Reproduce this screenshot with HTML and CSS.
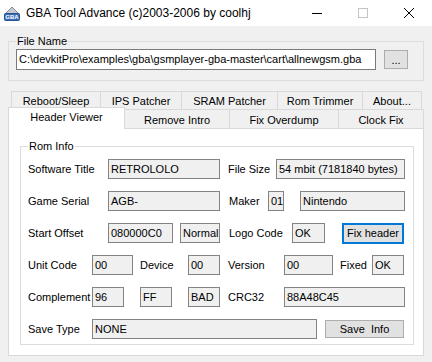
FILE: index.html
```html
<!DOCTYPE html>
<html lang="en">
<head>
  <meta charset="UTF-8" />
  <title>GBA Tool Advance</title>
  <link rel="stylesheet" href="styles.css">
</head>
<body>
  <!-- Title bar -->
  <div class="titlebar">
    <svg class="app-icon" viewBox="0 0 16 16">
      <polygon points="1,9 8,2 15,9" fill="#c8c8d0" stroke="#8a8a96" stroke-width="1"/>
      <rect x="0.5" y="8.5" width="15" height="7" rx="1" fill="#3a6fb8" stroke="#24508f"/>
      <text x="8" y="14.3" font-size="6" font-family="Liberation Sans, sans-serif" font-weight="bold" fill="#fff" text-anchor="middle">GBA</text>
    </svg>
    <span class="title">GBA Tool Advance (c)2003-2006 by coolhj</span>
    <div class="caption-buttons">
      <span class="cap-btn">
        <svg width="12" height="12" viewBox="0 0 12 12"><path d="M1 6.5h10" stroke="#000" stroke-width="1"/></svg>
      </span>
      <span class="cap-btn">
        <svg width="12" height="12" viewBox="0 0 12 12"><rect x="1.5" y="1.5" width="9" height="9" fill="none" stroke="#c4c4c4"/></svg>
      </span>
      <span class="cap-btn">
        <svg width="12" height="12" viewBox="0 0 12 12"><path d="M1 1L11 11M11 1L1 11" stroke="#000" stroke-width="1"/></svg>
      </span>
    </div>
  </div>

  <div class="window-body">
    <fieldset class="group file-group">
      <legend>File Name</legend>
      <div class="file-row">
        <div class="edit file-path">C:\devkitPro\examples\gba\gsmplayer-gba-master\cart\allnewgsm.gba</div>
        <div class="button browse">...</div>
      </div>
    </fieldset>

    <!-- Tabs -->
    <div class="tabs">
      <div class="tab-row back">
        <div class="tab w90">Reboot/Sleep</div>
        <div class="tab w82">IPS Patcher</div>
        <div class="tab w97">SRAM Patcher</div>
        <div class="tab w86">Rom Trimmer</div>
        <div class="tab w60">About...</div>
      </div>
      <div class="tab-row front">
        <div class="tab selected w117">Header Viewer</div>
        <div class="tab w106">Remove Intro</div>
        <div class="tab w110">Fix Overdump</div>
        <div class="tab w86">Clock Fix</div>
      </div>

      <div class="tab-panel">
        <fieldset class="group rom-group">
          <legend>Rom Info</legend>

          <div class="row">
            <span class="lbl w80">Software Title</span>
            <div class="edit w112">RETROLOLO</div>
            <span class="lbl w56 pl8">File Size</span>
            <div class="edit w129">54 mbit (7181840 bytes)</div>
          </div>

          <div class="row">
            <span class="lbl w80">Game Serial</span>
            <div class="edit w112">AGB-</div>
            <span class="lbl w48 pl9">Maker</span>
            <div class="edit w16">01</div>
            <div class="edit w105 ml16">Nintendo</div>
          </div>

          <div class="row">
            <span class="lbl w80">Start Offset</span>
            <div class="edit w65">080000C0</div>
            <div class="edit w40 ml7">Normal</div>
            <span class="lbl w72 pl9">Logo Code</span>
            <div class="edit w33">OK</div>
            <div class="button default w62 ml17">Fix header</div>
          </div>

          <div class="row">
            <span class="lbl w64">Unit Code</span>
            <div class="edit w41">00</div>
            <span class="lbl w55 pl7">Device</span>
            <div class="edit w32">00</div>
            <span class="lbl w64 pl8">Version</span>
            <div class="edit w49">00</div>
            <span class="lbl w39 pl7">Fixed</span>
            <div class="edit w32">OK</div>
          </div>

          <div class="row">
            <span class="lbl w64">Complement</span>
            <div class="edit w32">96</div>
            <div class="edit w32 ml16">FF</div>
            <div class="edit w32 ml16">BAD</div>
            <span class="lbl w64 pl8">CRC32</span>
            <div class="edit w121">88A48C45</div>
          </div>

          <div class="row">
            <span class="lbl w64">Save Type</span>
            <div class="edit w225">NONE</div>
            <div class="button save w79 ml8">Save&nbsp; Info</div>
          </div>
        </fieldset>
      </div>
    </div>
  </div>
</body>
</html>
```

FILE: styles.css
```css
* {
  box-sizing: border-box;
}

body {
  margin: 0;
  width: 432px;
  height: 362px;
  overflow: hidden;
  background: #f0f0f0;
  font-family: "Liberation Sans", Arial, sans-serif;
  font-size: 11px;
  color: #000;
}

/* title bar */
.titlebar {
  height: 26px;
  background: #fff;
  display: flex;
  align-items: center;
  font-size: 12px;
}

.app-icon {
  width: 16px;
  height: 16px;
  margin-left: 4px;
  margin-right: 6px;
}

.title {
  flex: 1;
}

.caption-buttons {
  display: flex;
  align-self: stretch;
}

.cap-btn {
  width: 46px;
  display: flex;
  align-items: center;
  justify-content: center;
}

.window-body {
  padding: 0 8px;
}

/* group boxes */
.group {
  min-width: 0;
  border: 1px solid #dcdcdc;
}

.group legend {
  padding: 0 1px;
  line-height: 13px;
}

.file-group {
  margin: 9px 0 0 0;
  width: 416px;
  padding: 1px 15px 10px 7px;
}

.file-row {
  display: flex;
  align-items: flex-start;
  gap: 8px;
}

/* edit boxes + buttons */
.edit {
  height: 20px;
  border: 1px solid #838383;
  background: #f0f0f0;
  padding: 1px 2px;
  line-height: 16px;
  white-space: nowrap;
  overflow: hidden;
}

.file-path {
  width: 361px;
  height: 21px;
  background: #fff;
  border-color: #7a7a7a;
}

.button {
  height: 20px;
  border: 1px solid #adadad;
  background: #e1e1e1;
  display: flex;
  align-items: center;
  justify-content: center;
  white-space: nowrap;
}

.button.default {
  border-color: #0078d7;
  box-shadow: inset 0 0 0 1px #0078d7;
  height: 21px;
}

.browse {
  width: 24px;
  height: 19px;
  margin-top: 1px;
}

.save {
  height: 18px;
}

/* tabs */
.tabs {
  margin-top: 10px;
}

.tab-row {
  display: flex;
}

.tab-row.back {
  margin-left: 3px;
  height: 18px;
}

.tab-row.front {
  height: 19px;
  align-items: flex-start;
}

.tab {
  border: 1px solid #d9d9d9;
  border-bottom: none;
  background: #f0f0f0;
  text-align: center;
  line-height: 13px;
  margin-left: -1px;
  white-space: nowrap;
}

.tab:first-child {
  margin-left: 0;
}

.back .tab {
  height: 18px;
  padding-top: 3px;
}

.front .tab {
  height: 19px;
  padding-top: 4px;
}

.tab.selected {
  position: relative;
  z-index: 1;
  height: 22px;
  margin-top: -2px;
  padding-top: 3px;
  background: #fff;
}

.tab-panel {
  width: 416px;
  height: 228px;
  background: #fff;
  border: 1px solid #d9d9d9;
  overflow: hidden;
}

.rom-group {
  margin: 11px 9px 0 11px;
  padding: 6px 8px 5px 7px;
}

.row {
  display: flex;
  align-items: center;
  height: 20px;
  margin-bottom: 12px;
}

.row:last-child {
  margin-bottom: 0;
}

.lbl {
  white-space: nowrap;
}

/* widths */
.w16 { width: 16px; }
.w32 { width: 32px; }
.w33 { width: 33px; }
.w39 { width: 39px; }
.w40 { width: 40px; }
.w41 { width: 41px; }
.w48 { width: 48px; }
.w49 { width: 49px; }
.w55 { width: 55px; }
.w56 { width: 56px; }
.w60 { width: 60px; }
.w62 { width: 62px; }
.w64 { width: 64px; }
.w65 { width: 65px; }
.w72 { width: 72px; }
.w79 { width: 79px; }
.w80 { width: 80px; }
.w82 { width: 82px; }
.w86 { width: 86px; }
.w90 { width: 90px; }
.w97 { width: 97px; }
.w105 { width: 105px; }
.w106 { width: 106px; }
.w110 { width: 110px; }
.w112 { width: 112px; }
.w117 { width: 117px; }
.w121 { width: 121px; }
.w129 { width: 129px; }
.w225 { width: 225px; }

.ml7 { margin-left: 7px; }
.ml8 { margin-left: 8px; }
.ml16 { margin-left: 16px; }
.ml17 { margin-left: 17px; }

.pl7 { padding-left: 7px; }
.pl8 { padding-left: 8px; }
.pl9 { padding-left: 9px; }
```
